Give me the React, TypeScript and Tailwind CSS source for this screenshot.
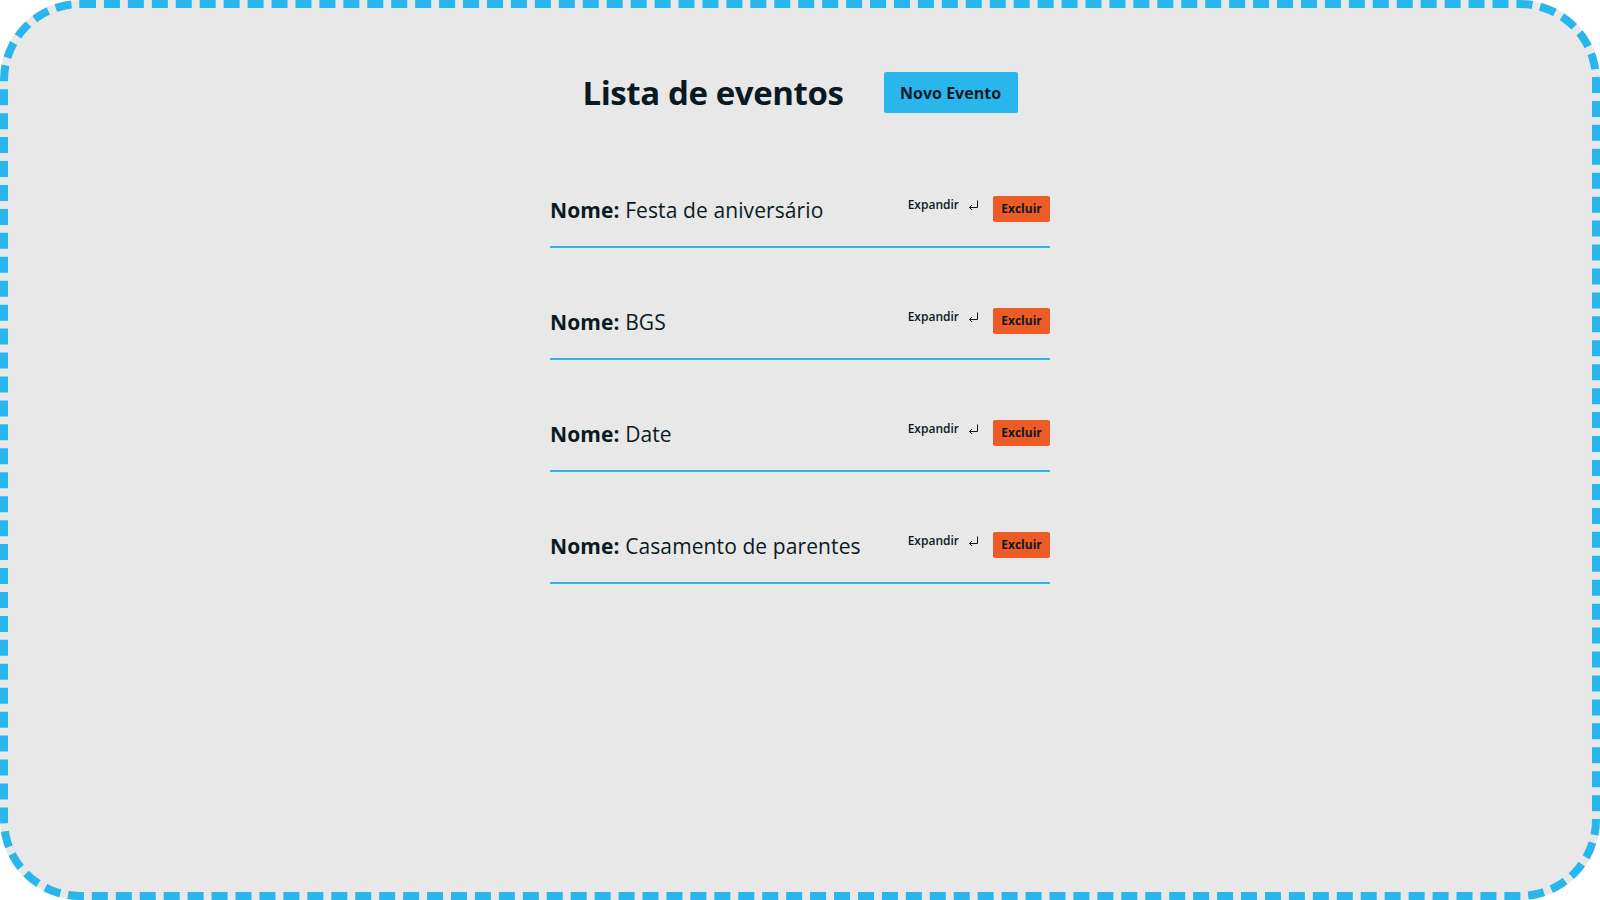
import React from "react";

const eventos = [
  "Festa de aniversário",
  "BGS",
  "Date",
  "Casamento de parentes",
];

function ReturnArrow() {
  return (
    <svg width="11" height="11" viewBox="0 0 11 11" fill="none" className="ml-[9px]">
      <path d="M9.5 0.5 V7.5 H1.5" stroke="#0b1a22" strokeWidth="1" />
      <path d="M4 5 L1.5 7.5 L4 10" stroke="#0b1a22" strokeWidth="1" />
    </svg>
  );
}

export default function App() {
  return (
    <div
      className="h-screen w-full bg-[#e8e8e8] border-8 border-dashed border-[#29b6ec] rounded-[80px] flex flex-col items-center text-[#0b1a22]"
      style={{ fontFamily: '"Open Sans", "Noto Sans", sans-serif' }}
    >
      <div className="flex items-center gap-[40px] mt-[64px]">
        <h1 className="text-[33px] font-bold leading-none tracking-[-0.4px]">
          Lista de eventos
        </h1>
        <button className="w-[134px] h-[41px] bg-[#29b6ec] rounded-[2px] text-[16px] font-bold text-[#0b1a22]">
          Novo Evento
        </button>
      </div>
      <ul className="w-[500px] mt-[23px]">
        {eventos.map((nome) => (
          <li
            key={nome}
            className="h-[112px] border-b-2 border-[#29b6ec] flex items-end justify-between pb-[24px]"
          >
            <p className="text-[21px] leading-none pb-[1px] tracking-[0.1px]">
              <span className="font-bold">Nome:</span> {nome}
            </p>
            <div className="flex items-center">
              <button className="flex items-center text-[12px] font-semibold leading-none mb-[8px]">
                <span>Expandir</span>
                <ReturnArrow />
              </button>
              <button className="ml-[14px] w-[57px] h-[26px] bg-[#ed5b27] rounded-[2px] text-[12px] font-bold text-[#0b1a22]">
                Excluir
              </button>
            </div>
          </li>
        ))}
      </ul>
    </div>
  );
}
